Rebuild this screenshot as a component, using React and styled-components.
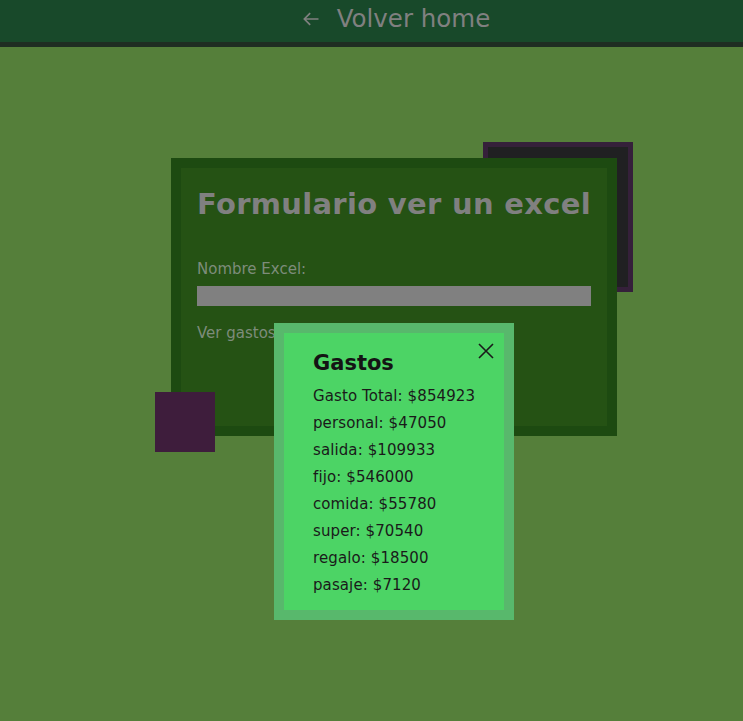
import React from 'react';
import styled, { createGlobalStyle } from 'styled-components';

const GlobalStyle = createGlobalStyle`
  html, body {
    margin: 0;
    padding: 0;
    background: #557f3a;
    font-family: "DejaVu Sans", "Open Sans", sans-serif;
  }
`;

const Page = styled.div`
  min-height: 721px;
  background: #557f3a;
`;

const Header = styled.header`
  height: 37px;
  padding-bottom: 5px;
  background: #18492a;
  border-bottom: 5px solid #1f2d22;
  display: flex;
  align-items: center;
  justify-content: center;
`;

const BackLink = styled.a`
  display: flex;
  align-items: center;
  gap: 16px;
  margin-left: 48px;
  color: #808080;
  font-size: 24.5px;
  text-decoration: none;
  cursor: pointer;
`;

const Main = styled.main`
  padding: 111px 0 0 171px;
`;

const Wrap = styled.div`
  position: relative;
  z-index: 0;
`;

const Card = styled.section`
  position: relative;
  width: 426px;
  height: 258px;
  background: #255214;
  border: 10px solid #1d4a11;
`;

const BackSquare = styled.div`
  position: absolute;
  top: -26px;
  right: -26px;
  width: 140px;
  height: 140px;
  background: #202022;
  border: 5px solid #35203a;
  z-index: -1;
`;

const FrontSquare = styled.div`
  position: absolute;
  left: -26px;
  top: 224px;
  width: 60px;
  height: 60px;
  background: #3e1d3c;
  z-index: 2;
`;

const Form = styled.form`
  padding: 19px 16px 0 16px;
  display: flex;
  flex-direction: column;
`;

const Title = styled.h1`
  margin: 0 0 39px;
  font-size: 29px;
  letter-spacing: 0.3px;
  font-weight: 700;
  color: #808080;
  white-space: nowrap;
`;

const Label = styled.label`
  font-size: 15px;
  color: #7d8c7b;
  margin-bottom: 8px;
`;

const Input = styled.div`
  height: 20px;
  background: #808080;
  margin-bottom: 18px;
`;

const Modal = styled.div`
  position: absolute;
  left: 93px;
  top: 155px;
  width: 240px;
  height: 297px;
  box-sizing: border-box;
  background: #4cd465;
  border: 10px solid #58b86c;
  z-index: 3;
  padding: 18px 0 0 29px;
`;

const Close = styled.button`
  position: absolute;
  top: 10px;
  right: 10px;
  width: 16px;
  height: 16px;
  padding: 0;
  border: none;
  background: none;
  display: flex;
  cursor: pointer;
`;

const ModalTitle = styled.h2`
  margin: 0 0 8px;
  font-size: 21px;
  font-weight: 700;
  color: #141414;
`;

const Row = styled.p`
  margin: 0;
  font-size: 15px;
  letter-spacing: 0.1px;
  line-height: 27px;
  color: #1a1a1a;
`;

const gastos = [
  ['Gasto Total', 854923],
  ['personal', 47050],
  ['salida', 109933],
  ['fijo', 546000],
  ['comida', 55780],
  ['super', 70540],
  ['regalo', 18500],
  ['pasaje', 7120],
];

const App = () => (
  <Page>
    <GlobalStyle />
    <Header>
      <BackLink>
        <svg width="20" height="20" viewBox="0 0 24 24" fill="none" stroke="#808080" strokeWidth="2">
          <path d="M21 12H4M11 5l-7 7 7 7" />
        </svg>
        Volver home
      </BackLink>
    </Header>
    <Main>
      <Wrap>
        <Card>
          <BackSquare />
          <Form>
            <Title>Formulario ver un excel</Title>
            <Label>Nombre Excel:</Label>
            <Input />
            <Label>Ver gastos</Label>
          </Form>
          <FrontSquare />
          <Modal>
            <Close>
              <svg width="16" height="16" viewBox="0 0 16 16" stroke="#1a1a1a" strokeWidth="1.6">
                <path d="M1 1l14 14M15 1L1 15" />
              </svg>
            </Close>
            <ModalTitle>Gastos</ModalTitle>
            {gastos.map(([name, value]) => (
              <Row key={name}>{name}: ${value}</Row>
            ))}
          </Modal>
        </Card>
      </Wrap>
    </Main>
  </Page>
);

export default App;
